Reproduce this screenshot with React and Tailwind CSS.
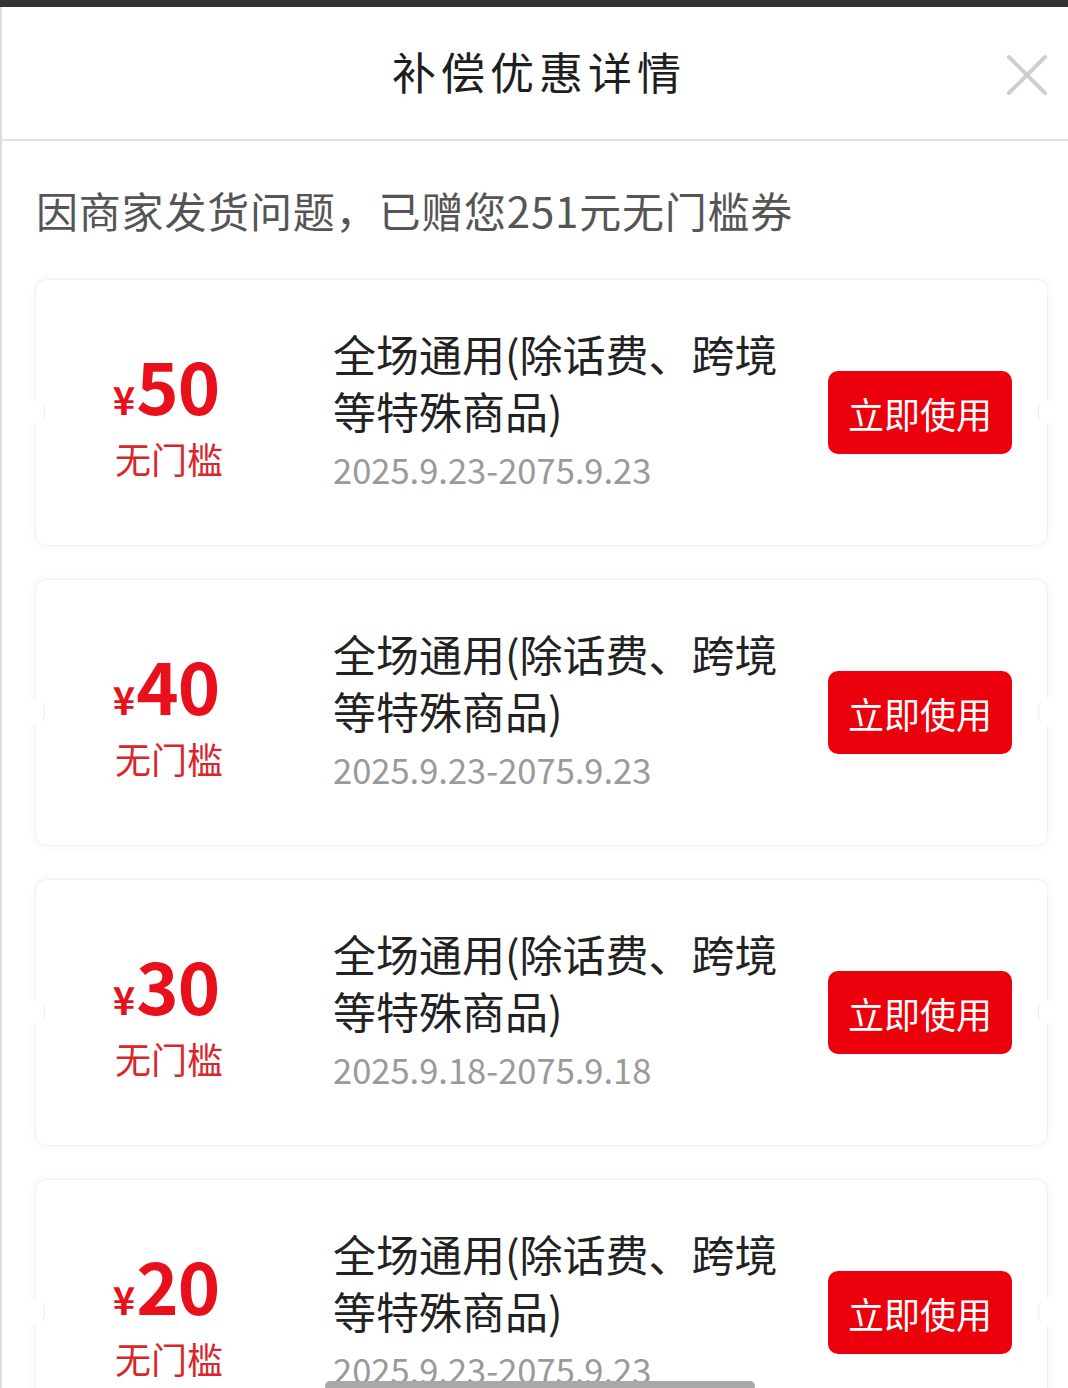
import React from 'react';

const coupons = [
  { amount: 50, range: '2025.9.23-2075.9.23' },
  { amount: 40, range: '2025.9.23-2075.9.23' },
  { amount: 30, range: '2025.9.18-2075.9.18' },
  { amount: 20, range: '2025.9.23-2075.9.23' },
];

const CouponCard = ({ amount, range }) => (
  <div className="relative flex items-center h-[267px] rounded-[12px] bg-white border border-[#f1f1f1] shadow-[0_0_10px_rgba(0,0,0,0.05)]">
    {/* notches */}
    <div className="absolute left-[-9px] top-[120px] w-[18px] h-[24px] rounded-full bg-white border-r border-[#ececec]" />
    <div className="absolute right-[-9px] top-[120px] w-[18px] h-[24px] rounded-full bg-white border-l border-[#ececec]" />

    <div className="w-[264px] shrink-0 flex flex-col items-center">
      <div className="flex items-baseline text-[#e8101a] font-bold leading-[78px] -ml-[4px]">
        <span className="text-[38px] mr-[1px]">¥</span>
        <span className="text-[72px] tracking-[-1px]">{amount}</span>
      </div>
      <div className="text-[36px] leading-[44px] -mt-[2px] text-[#d9262b] pl-[2px]">无门槛</div>
    </div>

    <div className="flex-1 pl-[33px] -mt-[8px]">
      <div className="text-[43px] leading-[57px] text-[#222]">
        <div>全场通用(除话费、跨境</div>
        <div>等特殊商品)</div>
      </div>
      <div className="text-[34.5px] leading-[48px] mt-[6px] text-[#9a9a9a]">{range}</div>
    </div>

    <button className="mr-[35px] w-[184px] h-[83px] shrink-0 rounded-[10px] bg-[#ec000c] text-white text-[36px] leading-none flex items-center justify-center">
      立即使用
    </button>
  </div>
);

export default function App() {
  return (
    <div
      className="relative h-[1388px] w-[1068px] overflow-hidden bg-white"
      style={{ fontFamily: '"Noto Sans CJK SC", "Noto Sans", sans-serif' }}
    >
      <div className="h-[7px] bg-[#333]" />
      <div className="h-[1381px] border-l-2 border-[#dcdcdc]">
        <div className="relative h-[134px] flex items-center justify-center border-b-2 border-[#e4e4e4]">
          <h1 className="text-[44px] tracking-[5px] text-[#1e1e1e] leading-none -mt-[4px] pl-[8px]">补偿优惠详情</h1>
          <svg className="absolute right-[20px] top-[47px]" width="42" height="42" viewBox="0 0 42 42">
            <path d="M3 3 L39 39 M39 3 L3 39" stroke="#cfcfcf" strokeWidth="4" strokeLinecap="round" />
          </svg>
        </div>

        <p className="pl-[34px] pt-[43px] text-[42px] leading-[52px] text-[#555] tracking-[0.8px]">
          因商家发货问题，已赠您251元无门槛券
        </p>

        <div className="mt-[43px] pl-[33px] pr-[20px] flex flex-col gap-[33px]">
          {coupons.map((c, i) => (
            <CouponCard key={i} amount={c.amount} range={c.range} />
          ))}
        </div>
      </div>

      <div className="absolute left-[325px] bottom-[-3px] w-[430px] h-[10px] rounded-full bg-[#a8a8a8]" />
    </div>
  );
}
